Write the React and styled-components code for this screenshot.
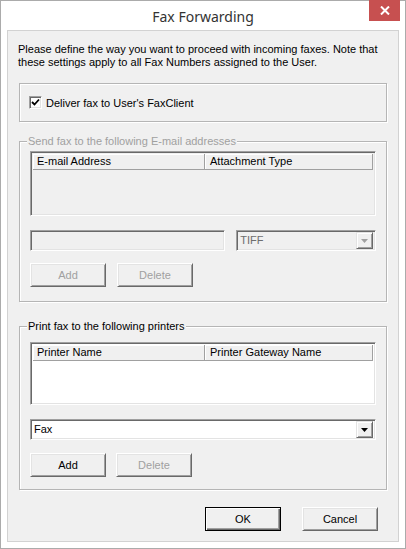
import React from "react";
import styled, { createGlobalStyle } from "styled-components";

const GlobalStyle = createGlobalStyle`
  html, body {
    margin: 0;
    padding: 0;
    background: #ffffff;
  }
  body {
    font-family: "Liberation Sans", Arial, sans-serif;
    font-size: 11px;
    color: #000;
  }
`;

const Window = styled.div`
  box-sizing: border-box;
  width: 406px;
  height: 549px;
  border: 1px solid #ababab;
  background: #ffffff;
  display: flex;
  flex-direction: column;
  padding: 0 6px 6px;
`;

const TitleBar = styled.div`
  position: relative;
  height: 29px;
  flex: none;
  display: flex;
  align-items: center;
  justify-content: center;
`;

const Title = styled.div`
  font-family: "Noto Sans", "Open Sans", sans-serif;
  font-size: 14px;
  color: #333;
  margin-top: 2px;
`;

const CloseButton = styled.div`
  position: absolute;
  top: -1px;
  right: -1px;
  width: 31px;
  height: 21px;
  background: #c75050;
  display: flex;
  align-items: center;
  justify-content: center;
`;

const Client = styled.div`
  flex: 1;
  border: 1px solid #d2d2d2;
  background: #f0f0f0;
  display: flex;
  flex-direction: column;
  padding: 0 11px 0 11px;
`;

const Intro = styled.p`
  margin: 12px 0 0 -1px;
  line-height: 13px;
`;

const GroupBox = styled.div`
  position: relative;
  box-sizing: border-box;
  height: ${(p) => p.$h}px;
  margin-top: ${(p) => p.$mt}px;
  border: 1px solid #b5b5b5;
  box-shadow: inset 1px 1px 0 #fff, 1px 1px 0 #fff;
  padding: 0 10px;
  display: flex;
  flex-direction: column;
`;

const Legend = styled.span`
  position: absolute;
  top: -8px;
  left: 7px;
  padding: 0 1px;
  background: #f0f0f0;
  line-height: 14px;
  color: ${(p) => (p.$disabled ? "#a0a0a0" : "#000")};
`;

const CheckRow = styled.label`
  display: flex;
  align-items: center;
  gap: 4px;
  height: 100%;
  margin-left: -1px;
`;

const CheckBox = styled.span`
  box-sizing: border-box;
  width: 13px;
  height: 13px;
  background: #fff;
  border-top: 1px solid #a0a0a0;
  border-left: 1px solid #a0a0a0;
  border-right: 1px solid #fff;
  border-bottom: 1px solid #fff;
  box-shadow: inset 1px 1px 0 #696969, inset -1px -1px 0 #e3e3e3;
  display: flex;
  align-items: center;
  justify-content: center;
`;

const ListView = styled.div`
  box-sizing: border-box;
  height: ${(p) => p.$h}px;
  margin-top: ${(p) => p.$mt}px;
  border-top: 1px solid #a0a0a0;
  border-left: 1px solid #a0a0a0;
  border-right: 1px solid #fff;
  border-bottom: 1px solid #fff;
  box-shadow: inset 1px 1px 0 #696969, inset -1px -1px 0 #e3e3e3;
  background: ${(p) => (p.$disabled ? "#f0f0f0" : "#fff")};
  padding: 2px;
`;

const HeaderRow = styled.div`
  display: grid;
  grid-template-columns: 172px 1fr;
  height: 16px;
`;

const HeaderCell = styled.div`
  box-sizing: border-box;
  background: #f0f0f0;
  border-right: 1px solid #a0a0a0;
  border-bottom: 1px solid #a0a0a0;
  box-shadow: inset 1px 1px 0 #fff;
  padding-left: ${(p) => (p.$first ? 4 : 5)}px;
  line-height: 15px;
  white-space: nowrap;
  overflow: hidden;
`;

const InputRow = styled.div`
  display: flex;
  gap: 11px;
  margin-top: ${(p) => p.$mt}px;
`;

const sunken = `
  box-sizing: border-box;
  height: 21px;
  border-top: 1px solid #a0a0a0;
  border-left: 1px solid #a0a0a0;
  border-right: 1px solid #fff;
  border-bottom: 1px solid #fff;
  box-shadow: inset 1px 1px 0 #696969, inset -1px -1px 0 #e3e3e3;
`;

const TextBox = styled.div`
  ${sunken}
  width: ${(p) => p.$w}px;
  background: #f0f0f0;
`;

const Combo = styled.div`
  ${sunken}
  width: ${(p) => p.$w}px;
  background: ${(p) => (p.$disabled ? "#f0f0f0" : "#fff")};
  color: ${(p) => (p.$disabled ? "#6d6d6d" : "#000")};
  display: flex;
  align-items: center;
  padding: 2px 2px 2px 3px;
`;

const ComboText = styled.span`
  flex: 1;
  line-height: 15px;
`;

const DropButton = styled.span`
  box-sizing: border-box;
  width: 17px;
  height: 17px;
  background: #f0f0f0;
  border-top: 1px solid #e3e3e3;
  border-left: 1px solid #e3e3e3;
  border-right: 1px solid #696969;
  border-bottom: 1px solid #696969;
  box-shadow: inset 1px 1px 0 #fff, inset -1px -1px 0 #a0a0a0;
  display: flex;
  align-items: center;
  justify-content: center;
`;

const ButtonRow = styled.div`
  display: flex;
  gap: ${(p) => p.$gap || 11}px;
  margin-top: ${(p) => p.$mt}px;
  justify-content: ${(p) => (p.$end ? "flex-end" : "flex-start")};
  padding-right: ${(p) => p.$pr || 0}px;
`;

const Button = styled.button`
  box-sizing: border-box;
  width: 76px;
  height: 24px;
  padding: 0;
  font: inherit;
  color: ${(p) => (p.disabled ? "#a0a0a0" : "#000")};
  background: #f0f0f0;
  border-top: 1px solid ${(p) => (p.$default ? "#000" : "#fff")};
  border-left: 1px solid ${(p) => (p.$default ? "#000" : "#fff")};
  border-right: 1px solid ${(p) => (p.$default ? "#000" : "#696969")};
  border-bottom: 1px solid ${(p) => (p.$default ? "#000" : "#696969")};
  box-shadow: ${(p) =>
    p.$default
      ? "inset 1px 1px 0 #fff, inset -1px -1px 0 #696969, inset -2px -2px 0 #a0a0a0"
      : "inset 1px 1px 0 #e3e3e3, inset -1px -1px 0 #a0a0a0"};
  border-radius: 0;
`;

const Arrow = ({ color }) => (
  <svg width="7" height="4" viewBox="0 0 7 4">
    <path d="M0 0h7L3.5 4z" fill={color} />
  </svg>
);

export default function App() {
  return (
    <>
      <GlobalStyle />
      <Window>
        <TitleBar>
          <Title>Fax Forwarding</Title>
          <CloseButton>
            <svg width="10" height="9" viewBox="0 0 10 9">
              <path d="M1 0.5l8 8M9 0.5l-8 8" stroke="#fff" strokeWidth="2" />
            </svg>
          </CloseButton>
        </TitleBar>
        <Client>
          <Intro>
            Please define the way you want to proceed with incoming faxes. Note that
            these settings apply to all Fax Numbers assigned to the User.
          </Intro>

          <GroupBox $h={39} $mt={14}>
            <CheckRow>
              <CheckBox>
                <svg width="9" height="9" viewBox="0 0 9 9">
                  <path d="M1 4l2.5 2.5L8 1.5" stroke="#000" strokeWidth="1.8" fill="none" />
                </svg>
              </CheckBox>
              Deliver fax to User's FaxClient
            </CheckRow>
          </GroupBox>

          <GroupBox $h={161} $mt={19}>
            <Legend $disabled>Send fax to the following E-mail addresses</Legend>
            <ListView $h={65} $mt={9} $disabled>
              <HeaderRow>
                <HeaderCell $first>E-mail Address</HeaderCell>
                <HeaderCell>Attachment Type</HeaderCell>
              </HeaderRow>
            </ListView>
            <InputRow $mt={14}>
              <TextBox $w={197} />
              <Combo $w={141} $disabled>
                <ComboText>TIFF</ComboText>
                <DropButton>
                  <Arrow color="#a0a0a0" />
                </DropButton>
              </Combo>
            </InputRow>
            <ButtonRow $mt={12} $gap={11}>
              <Button disabled>Add</Button>
              <Button disabled>Delete</Button>
            </ButtonRow>
          </GroupBox>

          <GroupBox $h={164} $mt={24}>
            <Legend>Print fax to the following printers</Legend>
            <ListView $h={63} $mt={15}>
              <HeaderRow>
                <HeaderCell $first>Printer Name</HeaderCell>
                <HeaderCell>Printer Gateway Name</HeaderCell>
              </HeaderRow>
            </ListView>
            <InputRow $mt={14}>
              <Combo $w={348}>
                <ComboText>Fax</ComboText>
                <DropButton>
                  <Arrow color="#000" />
                </DropButton>
              </Combo>
            </InputRow>
            <ButtonRow $mt={13} $gap={10}>
              <Button>Add</Button>
              <Button disabled>Delete</Button>
            </ButtonRow>
          </GroupBox>

          <ButtonRow $mt={17} $end $gap={21} $pr={9}>
            <Button $default>OK</Button>
            <Button>Cancel</Button>
          </ButtonRow>
        </Client>
      </Window>
    </>
  );
}
